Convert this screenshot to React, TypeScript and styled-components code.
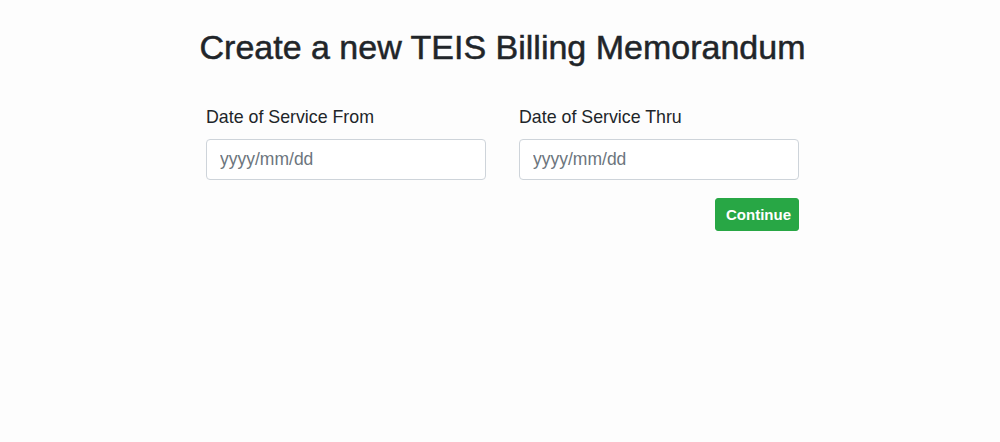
import React, { useState } from "react";
import styled, { createGlobalStyle } from "styled-components";

const GlobalStyle = createGlobalStyle`
  html, body {
    margin: 0;
    padding: 0;
    background: #fdfdfd;
    font-family: "Liberation Sans", Arial, sans-serif;
    color: #212529;
  }
`;

const App: React.FC = () => {
  const [from, setFrom] = useState("");
  const [thru, setThru] = useState("");

  return (
    <>
      <GlobalStyle />
      <Page>
        <Title>Create a new TEIS Billing Memorandum</Title>
        <FieldRow>
          <Field>
            <Label>Date of Service From</Label>
            <Input
              type="text"
              placeholder="yyyy/mm/dd"
              value={from}
              onChange={(e) => setFrom(e.target.value)}
            />
          </Field>
          <Field>
            <Label>Date of Service Thru</Label>
            <Input
              type="text"
              placeholder="yyyy/mm/dd"
              value={thru}
              onChange={(e) => setThru(e.target.value)}
            />
          </Field>
        </FieldRow>
        <Actions>
          <Button type="button">Continue</Button>
        </Actions>
      </Page>
    </>
  );
};

// CSS
const Page = styled.div`
  width: 593px;
  margin-left: calc(50% - 294px);
  padding-top: 27px;
`;

const Title = styled.h1`
  margin: 0 -100px 38px;
  text-align: center;
  font-size: 34px;
  font-weight: 400;
  line-height: 41px;
  color: #212529;
  -webkit-text-stroke: 0.5px #212529;
  white-space: nowrap;
`;

const FieldRow = styled.div`
  display: grid;
  grid-template-columns: 280px 280px;
  justify-content: space-between;
`;

const Field = styled.div`
  display: flex;
  flex-direction: column;
`;

const Label = styled.label`
  font-size: 17.8px;
  line-height: 22px;
  margin-bottom: 11px;
  color: #212529;
`;

const Input = styled.input`
  box-sizing: border-box;
  width: 100%;
  height: 41px;
  padding: 0 13px;
  border: 1px solid #ced4da;
  border-radius: 4px;
  background: #fff;
  font-family: inherit;
  font-size: 17.5px;
  color: #495057;
  outline: none;

  &::placeholder {
    color: #6c757d;
  }
`;

const Actions = styled.div`
  display: flex;
  justify-content: flex-end;
  margin-top: 18px;
`;

const Button = styled.button`
  height: 33px;
  padding: 0 10px;
  width: 84px;
  background: #28a745;
  color: #fff;
  border: 1px solid #28a745;
  border-radius: 3px;
  font-family: inherit;
  font-size: 15px;
  font-weight: 700;
  cursor: pointer;

  &:hover {
    background: #218838;
  }
`;

export default App;
